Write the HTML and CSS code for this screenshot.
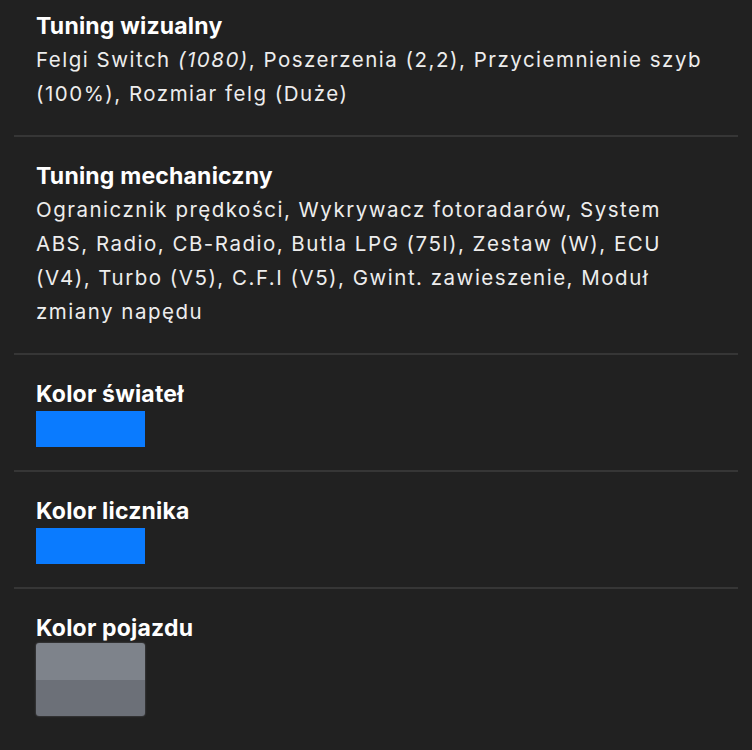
FILE: index.html
```html
<!DOCTYPE html>
<html lang="pl">
<head>
  <meta charset="UTF-8" />
  <title>Szczegóły pojazdu</title>
  <link rel="stylesheet" href="styles.css">
</head>
<body>
  <div class="details">
    <div class="detail">
      <div class="detail-title">Tuning wizualny</div>
      <div class="detail-text">Felgi Switch <i>(1080)</i>, Poszerzenia (2,2), Przyciemnienie szyb (100%), Rozmiar felg (Duże)</div>
    </div>
    <div class="detail">
      <div class="detail-title">Tuning mechaniczny</div>
      <div class="detail-text">Ogranicznik prędkości, Wykrywacz fotoradarów, System ABS, Radio, CB-Radio, Butla LPG (75l), Zestaw (W), ECU (V4), Turbo (V5), C.F.I (V5), Gwint. zawieszenie, Moduł zmiany napędu</div>
    </div>
    <div class="detail">
      <div class="detail-title">Kolor świateł</div>
      <div class="swatch swatch-blue"></div>
    </div>
    <div class="detail">
      <div class="detail-title">Kolor licznika</div>
      <div class="swatch swatch-blue"></div>
    </div>
    <div class="detail">
      <div class="detail-title">Kolor pojazdu</div>
      <div class="swatch swatch-paint">
        <div class="paint-top"></div>
        <div class="paint-bottom"></div>
      </div>
    </div>
  </div>
</body>
</html>
```

FILE: styles.css
```css
body {
  font-family: Inter, "Noto Sans", Arial, sans-serif;
  background: #212121;
  margin: 0;
  padding: 0;
  color: #f2f2f2;
}
.details {
  padding: 0 14px;
}
.detail {
  padding: 26px 22px 23px 22px;
  border-bottom: 2px solid #363636;
}
.detail:first-child {
  padding-top: 13px;
}
.detail:last-child {
  border-bottom: none;
}
.detail-title {
  font-size: 23px;
  font-weight: 700;
  line-height: 26px;
  letter-spacing: 0.2px;
  color: #fff;
  margin-bottom: 4px;
}
.detail-text {
  max-width: 670px;
  font-size: 20.5px;
  line-height: 34px;
  letter-spacing: 1.5px;
  color: #ededed;
  margin-bottom: 1px;
}
.swatch {
  width: 109px;
  height: 36px;
}
.swatch-blue {
  background: #0a7bff;
}
.swatch-paint {
  height: 73px;
  margin-top: -2px;
  border-radius: 3px;
  overflow: hidden;
  display: flex;
  flex-direction: column;
  box-shadow: 0 0 2px rgba(160, 160, 170, 0.5);
}
.paint-top {
  flex: 1;
  background: #7e838b;
}
.paint-bottom {
  flex: 1;
  background: #6c7078;
}
```
